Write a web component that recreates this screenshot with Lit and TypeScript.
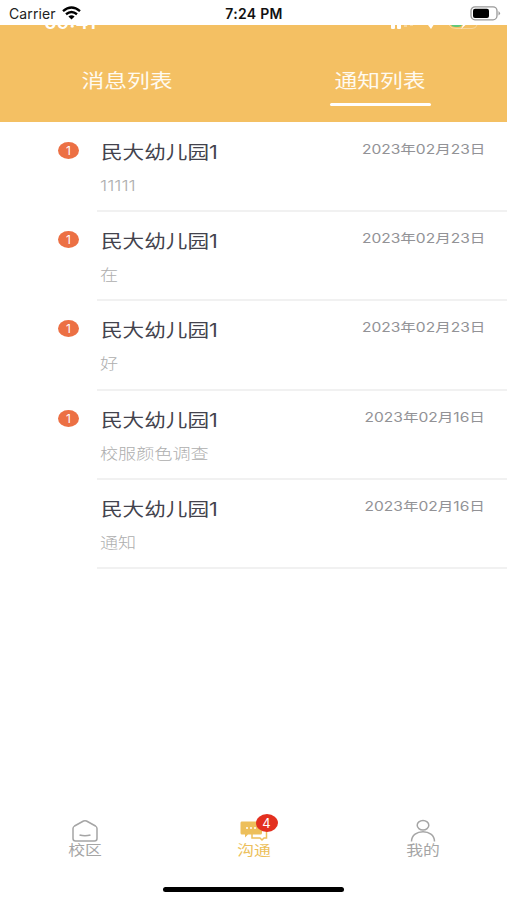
import { LitElement, html, css, svg, nothing } from "lit";
import { customElement, property } from "lit/decorators.js";

interface Notice {
  unread: number;
  title: string;
  body: string;
  date: string;
}

const notices: Notice[] = [
  { unread: 1, title: "民大幼儿园1", body: "11111", date: "2023年02月23日" },
  { unread: 1, title: "民大幼儿园1", body: "在", date: "2023年02月23日" },
  { unread: 1, title: "民大幼儿园1", body: "好", date: "2023年02月23日" },
  { unread: 1, title: "民大幼儿园1", body: "校服颜色调查", date: "2023年02月16日" },
  { unread: 0, title: "民大幼儿园1", body: "通知", date: "2023年02月16日" },
];

@customElement("status-bar")
export class StatusBar extends LitElement {
  static styles = css`
    :host { display: grid; grid-template-columns: 1fr auto 1fr; align-items: center; height: 25px; padding: 1px 6px 0 9px; box-sizing: border-box; background: #fff; color: #222; font-size: 14px; }
    .left { display: flex; align-items: center; gap: 6px; letter-spacing: 0.1px; }
    .time { font-weight: 600; font-size: 14px; letter-spacing: 0.3px; transform: translateX(-1px); color: #111; }
    .battery { justify-self: end; }
    svg { display: block; }
  `;
  render() {
    return html`
      <div class="left">
        <span>Carrier</span>
        <svg width="19" height="14" viewBox="0 0 19 14" fill="none" stroke="#000" stroke-width="2.4">
          <path d="M1 5.1Q9.5-2 18 5.1M4 8.300q5.500-4.500 11 0" />
          <path d="M6.400 10.400q3.100-2.300 6.200 0L9.500 13.400z" fill="#000" stroke="none" />
        </svg>
      </div>
      <span class="time">7:24 PM</span>
      <svg class="battery" width="31" height="15" viewBox="0 0 31 15">
        <rect x="1" y="0.800" width="26" height="13" rx="4" fill="#fff" stroke="#999" stroke-width="1.300" />
        <rect x="3" y="2.700" width="16" height="9.200" rx="2" fill="#000" />
        <path d="M28.500 5q3 2.300 0 4.600z" fill="#999" />
      </svg>
    `;
  }
}

@customElement("tab-header")
export class TabHeader extends LitElement {
  static styles = css`
    :host { display: grid; grid-template-columns: 1fr 1fr; position: relative; overflow: hidden; height: 97px; background: #f4c063; color: #fffaf0; }
    .tab { display: flex; flex-direction: column; align-items: center; padding-top: 44px; }
    .label { font-size: 19px; line-height: 26px; transform: scaleX(1.2); }
    .bar { width: 101px; height: 3px; margin-top: 8px; border-radius: 2px; background: #fff; }
    .clock { position: absolute; left: 44px; top: -13px; color: #fff; font-size: 18px; line-height: 22px; font-weight: 600; transform: scaleX(1.08); transform-origin: left; }
    .signals { position: absolute; left: 388px; top: 0; }
  `;
  render() {
    return html`
      <span class="clock">09:41</span>
      <svg class="signals" width="92" height="6" viewBox="0 0 92 6" fill="#fff">
        <rect x="3" y="-5" width="4" height="9" rx="1" />
        <rect x="9" y="-5" width="4" height="9" rx="1" />
        <path d="M16 0h3v2h-3zM22 0h3v1h-3z" opacity=".35" />
        <path d="M40 0h5.500L43 4z" />
        <path d="M63 0h11q-1 2-4 2h-3q-3 0-4-2z" fill="#5fc878" />
        <path d="M61 0q2 3.500 7 3.500h16q4 0 5-3.500" fill="none" stroke="#fff" opacity=".35" />
        <path d="M75 0h2.500L73 4z" />
      </svg>
      <div class="tab"><span class="label">消息列表</span></div>
      <div class="tab"><span class="label">通知列表</span><div class="bar"></div></div>
    `;
  }
}

@customElement("notice-row")
export class NoticeRow extends LitElement {
  @property({ attribute: false }) notice!: Notice;
  static styles = css`
    :host { display: grid; grid-template-columns: 97px 1fr; height: 89.4px; }
    .side { display: flex; justify-content: flex-end; padding: 19px 18px 0 0; }
    .badge { display: flex; align-items: center; justify-content: center; width: 21px; height: 17px; border-radius: 50%; background: #ec7044; color: #fff; font-size: 12px; }
    .content { display: flex; justify-content: space-between; padding: 0 22px 0 4px; border-bottom: 2px solid #f1f1f1; }
    .text { display: flex; flex-direction: column; align-items: flex-start; }
    .title, .body { transform: scaleX(1.2); transform-origin: left; }
    .title { margin-top: 17px; font-size: 18px; line-height: 26px; color: #43434d; }
    .body { margin: 9px 0 0 -1px; font-size: 15.1px; line-height: 22px; color: #aeaeae; font-weight: 300; }
    .date { margin-top: 17px; height: 19px; font-size: 12.4px; line-height: 19px; color: #929296; transform: scaleX(1.255); transform-origin: right; }
  `;
  render() {
    const n = this.notice;
    return html`
      <div class="side">${n.unread ? html`<span class="badge">${n.unread}</span>` : nothing}</div>
      <div class="content">
        <div class="text"><span class="title">${n.title}</span><span class="body">${n.body}</span></div>
        <span class="date">${n.date}</span>
      </div>
    `;
  }
}

const house = svg`<path d="M4 9.500Q4 8 5.500 7L14.500 2Q16 1.300 17.500 2L26.500 7Q28 8 28 9.500V19.500Q28 22 25.500 22H6.500Q4 22 4 19.500z" /><path d="M10.500 16q5.500 1.600 11 0" />`;
const chat = svg`<path d="M14 10H28.500V19H26L24 21L22 19H14z" /><path d="M3.500 2.500h19q1.500 0 1.500 1.500v10q0 1.500-1.500 1.500H10l-3 3v-3H4q-1.500 0-1.500-1.500V4q0-1.500 1-1.500z" fill="#edbf5b" stroke="none" /><path d="M8 9h2m2 0h2m2 0h2" stroke="#fff" />`;
const person = svg`<ellipse cx="16" cy="6.200" rx="5.800" ry="4.800" /><path d="M4.500 22.500C4.500 9.500 27.500 9.500 27.500 22.500" />`;

@customElement("bottom-nav")
export class BottomNav extends LitElement {
  static styles = css`
    :host { display: grid; grid-template-columns: repeat(3, 1fr); }
    .item { display: flex; flex-direction: column; align-items: center; color: #a5a5a5; }
    .item.active { color: #edbf5b; }
    .icon { position: relative; width: 32px; height: 24px; }
    svg { display: block; }
    .label { font-size: 14px; line-height: 18px; margin-top: -2px; transform: scaleX(1.2); }
    .badge { position: absolute; left: 18px; top: -5px; width: 22px; height: 18px; display: flex; align-items: center; justify-content: center; border-radius: 50%; background: #e3301f; color: #fff; font-size: 13px; }
  `;
  render() {
    const items = [
      { icon: house, label: "校区", count: 0 },
      { icon: chat, label: "沟通", count: 4 },
      { icon: person, label: "我的", count: 0 },
    ];
    return html`${items.map(
      (i) => html`
        <div class="item ${i.count ? "active" : ""}">
          <div class="icon">
            <svg width="32" height="24" viewBox="0 0 32 24" fill="none" stroke="currentColor" stroke-width="1.500">${i.icon}</svg>
            ${i.count ? html`<span class="badge">${i.count}</span>` : nothing}
          </div>
          <span class="label">${i.label}</span>
        </div>
      `
    )}`;
  }
}

@customElement("app-root")
export class AppRoot extends LitElement {
  static styles = css`
    :host { display: flex; flex-direction: column; width: 507px; height: 900px; overflow: hidden; background: #fff; font-family: Inter, "Noto Sans CJK SC", sans-serif; }
    .list { flex: 1; padding-top: 0.500px; }
    .home { width: 181px; height: 5px; border-radius: 3px; background: #000; margin: 28px auto 8px; }
  `;
  render() {
    return html`
      <status-bar></status-bar>
      <tab-header></tab-header>
      <div class="list">${notices.map((n) => html`<notice-row .notice=${n}></notice-row>`)}</div>
      <bottom-nav></bottom-nav>
      <div class="home"></div>
    `;
  }
}
